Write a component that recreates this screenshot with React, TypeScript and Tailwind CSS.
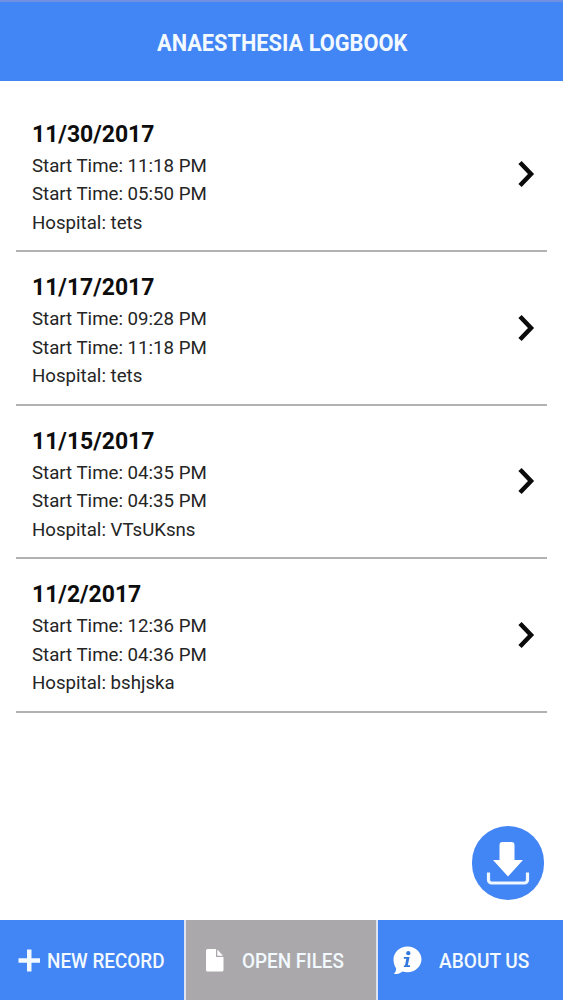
type LogRecord = {
  date: string;
  start: string;
  end: string;
  hospital: string;
};

const RECORDS: LogRecord[] = [
  { date: "11/30/2017", start: "11:18 PM", end: "05:50 PM", hospital: "tets" },
  { date: "11/17/2017", start: "09:28 PM", end: "11:18 PM", hospital: "tets" },
  { date: "11/15/2017", start: "04:35 PM", end: "04:35 PM", hospital: "VTsUKsns" },
  { date: "11/2/2017", start: "12:36 PM", end: "04:36 PM", hospital: "bshjska" },
];

function ChevronIcon() {
  return (
    <svg width="18" height="28" viewBox="0 0 18 28" fill="none" className="shrink-0">
      <path d="M3 2.500 14 14 3 25.500" stroke="#0b0b0b" strokeWidth="4.500" />
    </svg>
  );
}

function DownloadIcon() {
  return (
    <svg width="44" height="44" viewBox="0 0 44 44" fill="none">
      <path d="M16.500 1h9a3 3 0 0 1 3 3v15H37L22 35.500 7 19h6.500V4a3 3 0 0 1 3-3Z" fill="#fff" />
      <path d="M2.500 31.500V39a3 3 0 0 0 3 3h33a3 3 0 0 0 3-3v-7.500" stroke="#eff7ff" strokeWidth="3.200" />
    </svg>
  );
}

function PlusIcon() {
  return (
    <svg width="22" height="23" viewBox="0 0 22 23" className="shrink-0">
      <path d="M9 .5h4.500v8.800H22v4.400h-8.500v8.800H9v-8.800H.5V9.300H9Z" fill="#f2f9ff" />
    </svg>
  );
}

function FileIcon() {
  return (
    <svg width="18" height="23" viewBox="0 0 18 23" className="shrink-0">
      <path d="M1.500 0H10v8h7.500v13a1.500 1.500 0 0 1-1.500 1.500H1.500A1.500 1.500 0 0 1 0 21V1.500A1.500 1.500 0 0 1 1.500 0Z" fill="#fff" />
      <path d="M11.300.5 17 6.700h-5.700Z" fill="#fff" />
    </svg>
  );
}

function InfoIcon() {
  return (
    <svg width="29" height="29" viewBox="0 0 29 29" className="shrink-0">
      <path
        d="M14.500.5C22.300.5 28.500 6.200 28.500 13.300S22.300 26.200 14.500 26.200c-1.800 0-3.500-.3-5-.8C7.300 27.200 4.200 28.300.8 28c1.500-1.400 2.400-3.400 2.300-5.700C1.500 20 .5 16.900.5 13.500.5 6.300 6.700.5 14.500.5Z"
        fill="#fff"
      />
      <circle cx="15.300" cy="7.200" r="2.100" fill="#3378dc" />
      <path d="M10.800 11h5.800L14.800 19.200h2.200v1.800h-6.200v-1.600h1.200l1.300-6.600h-2.500Z" fill="#3378dc" />
    </svg>
  );
}

function RecordRow({ record }: { record: LogRecord }) {
  return (
    <li className="flex h-[153.500px] items-center justify-between border-b-2 border-[#b2b2b2] pr-3 pl-[15.500px]">
      <div className="pt-0.5 text-[19px] leading-[28.500px] text-[#252525]">
        <h2 className="mb-0.5 origin-left scale-x-[0.957] pt-1 text-2xl leading-8 font-bold text-[#0d0d0d]">
          {record.date}
        </h2>
        <p className="origin-left scale-x-[0.982]">Start Time: {record.start}</p>
        <p className="origin-left scale-x-[0.982]">Start Time: {record.end}</p>
        <p className="origin-left scale-x-[0.982]">Hospital: {record.hospital}</p>
      </div>
      <ChevronIcon />
    </li>
  );
}

export default function App() {
  return (
    <div className="relative flex h-[1000px] w-[563px] flex-col overflow-hidden bg-white font-['Roboto',sans-serif]">
      <header className="flex h-[81px] shrink-0 items-center justify-center border-t-2 border-[#6f8fe0] bg-[#4285f4] pt-[5px] pl-px">
        <h1 className="scale-x-[0.947] text-[23px] font-bold whitespace-nowrap text-[#f2f9ff]">
          ANAESTHESIA LOGBOOK
        </h1>
      </header>

      <main className="flex-1 px-4 pt-[17.500px]">
        <ul>
          {RECORDS.map((record) => (
            <RecordRow key={record.date} record={record} />
          ))}
        </ul>
      </main>

      <button
        type="button"
        aria-label="Download"
        className="absolute top-[826px] left-[472px] flex h-[74px] w-[72px] items-center justify-center rounded-full bg-[#4285f4]"
      >
        <DownloadIcon />
      </button>

      <nav className="flex h-20 shrink-0 text-xl font-medium whitespace-nowrap text-[#f2f9ff]">
        <button type="button" className="flex w-[184px] items-center bg-[#4285f4] pl-[18px]">
          <PlusIcon />
          <span className="ml-[7px] origin-left scale-x-[0.945] pt-0.5">NEW RECORD</span>
        </button>
        <button
          type="button"
          className="flex w-[194px] items-center border-x-2 border-[#dfe3f0] bg-[#aaa8aa] pl-[20px]"
        >
          <FileIcon />
          <span className="ml-[18px] origin-left scale-x-[0.945] pt-0.5">OPEN FILES</span>
        </button>
        <button type="button" className="flex flex-1 items-center bg-[#4285f4] pl-[15px]">
          <InfoIcon />
          <span className="ml-[17px] origin-left scale-x-[0.955] pt-0.5">ABOUT US</span>
        </button>
      </nav>
    </div>
  );
}
